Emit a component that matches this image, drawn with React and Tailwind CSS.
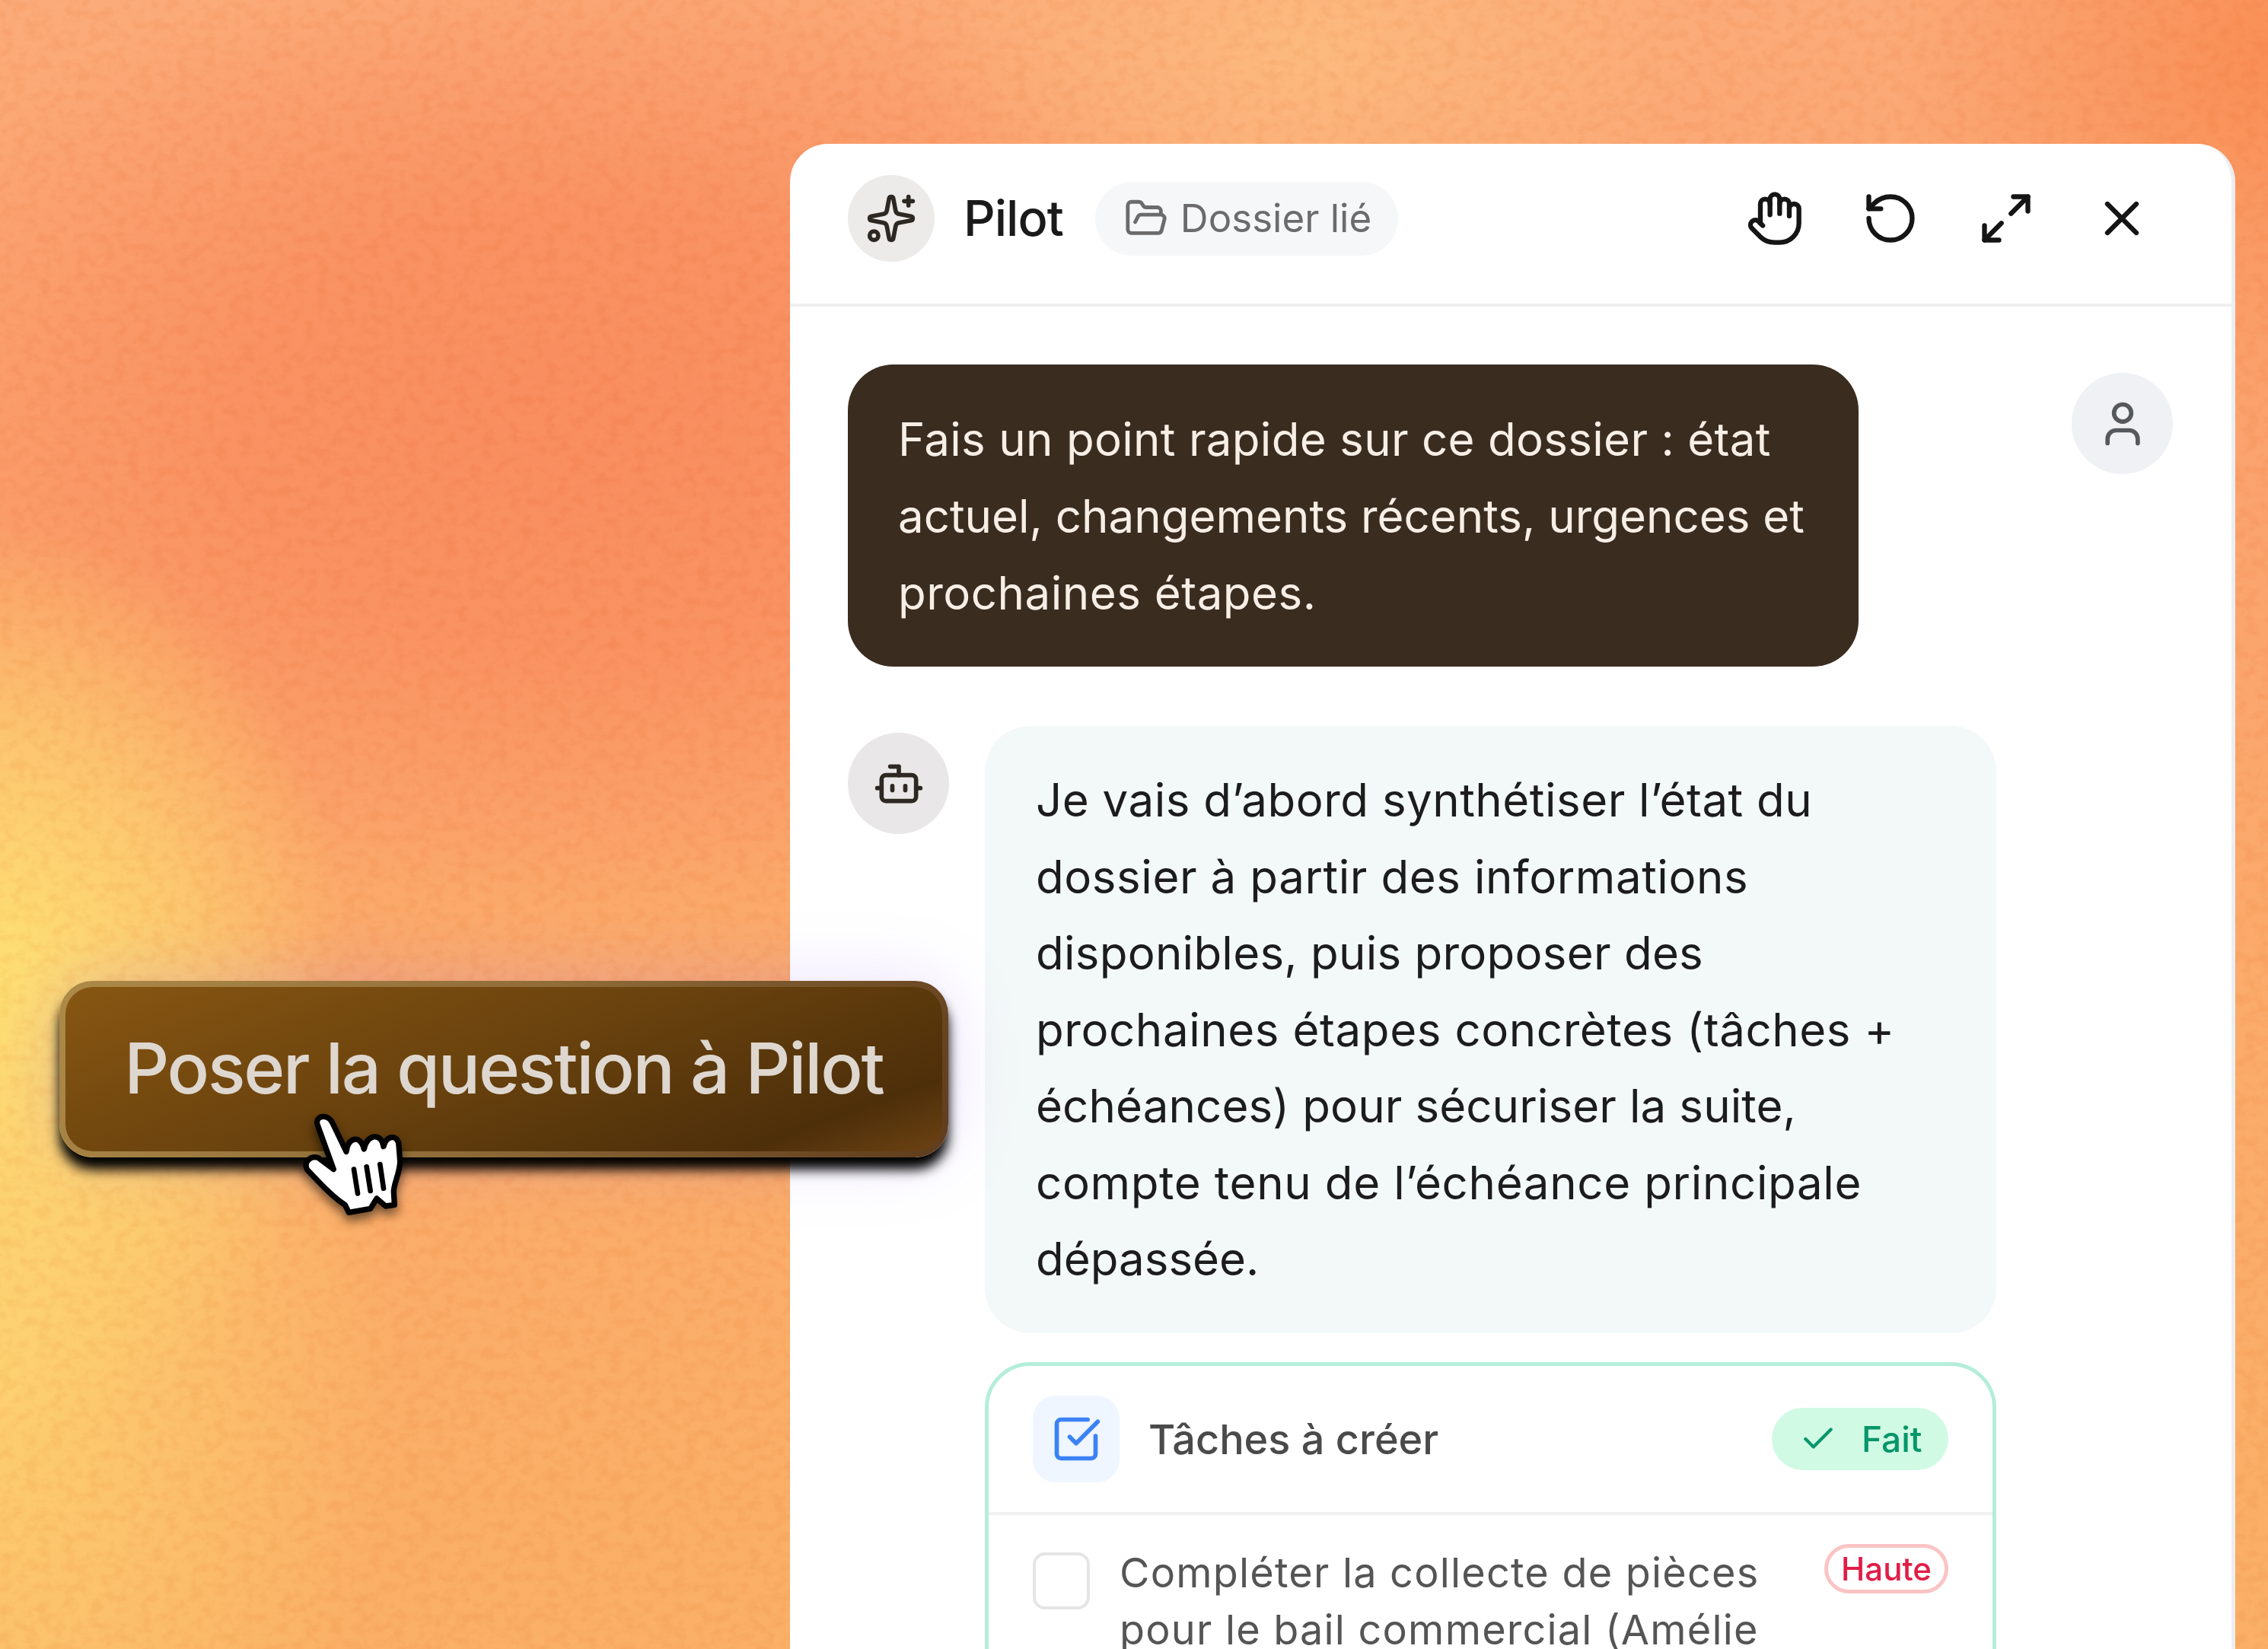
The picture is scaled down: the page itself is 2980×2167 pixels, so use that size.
import { Sparkles, FolderOpen, Hand, RotateCcw, Maximize2, X, User, Bot, SquareCheckBig, Check } from "lucide-react";

function HandCursor()
{
    return (
        <svg viewBox="0 0 660 600" className="absolute left-[360px] top-[1430px] w-[220px] h-[200px] drop-shadow-[0_8px_7px_rgba(0,0,0,0.55)]">
            <path
                d="M170 140 C165 105 215 100 232 140 L285 250 C290 195 340 180 355 240 C365 180 425 175 432 230 C440 185 490 180 492 225 L497 290 C495 340 470 380 472 410 L475 460 L440 465 L405 435 L380 475 L295 490 L280 460 C240 435 200 395 130 320 C115 285 150 265 175 275 L235 320 Z"
                fill="#fff" stroke="#000" strokeWidth="22" strokeLinejoin="round"
            />
            <path d="M315 320L330 415M365 310L380 405M418 300L432 395" stroke="#000" strokeWidth="20" strokeLinecap="round" fill="none" />
        </svg>
    );
}

function App()
{
    return (
        <div className="relative w-[2980px] h-[2167px] overflow-hidden flex justify-end items-start pt-[189px] pr-[43px] [font-family:Inter,sans-serif] bg-[radial-gradient(ellipse_460px_600px_at_0px_1290px,#fee074_0%,#fdd87299_55%,transparent_100%),radial-gradient(ellipse_520px_800px_at_0px_1800px,#fdd070_0%,transparent_100%),radial-gradient(ellipse_520px_300px_at_1720px_60px,#fcba7e_0%,transparent_100%),radial-gradient(ellipse_500px_520px_at_2980px_80px,#f98f56_0%,transparent_100%),radial-gradient(ellipse_1000px_640px_at_760px_560px,#f98e5f_0%,#f98e5fcc_45%,transparent_100%),linear-gradient(180deg,#fbab79_0%,#fba36e_30%,#fbab6b_60%,#fab066_100%)]">
            <svg className="absolute inset-0 w-full h-full opacity-[0.16] mix-blend-multiply">
                <filter id="grain">
                    <feTurbulence type="fractalNoise" baseFrequency="0.06 0.075" numOctaves="4" seed="7" />
                    <feColorMatrix values="0 0 0 0 0.85  0 0 0 0 0.45  0 0 0 0 0.2  0 0 0 3 -1.3" />
                </filter>
                <rect width="100%" height="100%" filter="url(#grain)" />
            </svg>

            <div className="relative w-[1899px] h-[1978px] overflow-hidden bg-white rounded-t-[50px] border-r-[5px] border-[#eceef0]">
                <div className="flex items-center h-[214px] px-[76px] pb-[14px] border-b-[4px] border-[#f0f0f0]">
                    <div className="w-[114px] h-[114px] rounded-full bg-[#ecebea] flex items-center justify-center text-[#2e2823]">
                        <Sparkles size={68} strokeWidth={2} />
                    </div>
                    <span className="ml-[38px] text-[65px] font-medium text-[#1a1a1a] tracking-[-1px]">Pilot</span>
                    <div className="ml-[42px] w-[398px] h-[97px] rounded-full bg-[#f6f7f9] flex items-center pl-[38px] gap-[16px] text-[#6b6b6b]">
                        <FolderOpen size={58} strokeWidth={2} />
                        <span className="text-[51px] whitespace-nowrap">Dossier lié</span>
                    </div>
                    <div className="ml-auto mr-[30px] flex items-center gap-[76px] text-[#151515]">
                        <Hand size={76} strokeWidth={2} />
                        <RotateCcw size={76} strokeWidth={2} />
                        <Maximize2 size={76} strokeWidth={2} />
                        <X size={76} strokeWidth={2} />
                    </div>
                </div>

                <div className="pt-[76px] pl-[76px] pr-[77px]">
                    <div className="flex justify-between items-start">
                        <div className="w-[1328px] h-[397px] rounded-[60px] bg-[#3b2c20] text-[#f7efe6] text-[60px] leading-[101px] pl-[66px] pt-[48px] whitespace-nowrap">
                            <div className="tracking-[0.3px]">Fais un point rapide sur ce dossier : état</div>
                            <div>actuel, changements récents, urgences et</div>
                            <div className="tracking-[0.5px]">prochaines étapes.</div>
                        </div>
                        <div className="mt-[11px] w-[133px] h-[133px] rounded-full bg-[#eff1f4] flex items-center justify-center text-[#55585c]">
                            <User size={68} strokeWidth={2} />
                        </div>
                    </div>

                    <div className="mt-[78px] flex items-start gap-[47px]">
                        <div className="mt-[9px] w-[133px] h-[133px] rounded-full bg-[#e9e7e7] flex items-center justify-center text-[#2e2823]">
                            <Bot size={68} strokeWidth={2} />
                        </div>
                        <div className="w-[1329px] flex flex-col gap-[38px]">
                            <div className="h-[798px] rounded-[60px] bg-[#f3f8f8] text-[#1c1c1c] text-[60px] leading-[100.5px] pl-[67px] pt-[47px] whitespace-nowrap">
                                <div className="tracking-[0.5px]">Je vais d’abord synthétiser l’état du</div>
                                <div className="tracking-[0.57px]">dossier à partir des informations</div>
                                <div className="tracking-[0.25px]">disponibles, puis proposer des</div>
                                <div className="tracking-[0.57px]">prochaines étapes concrètes (tâches +</div>
                                <div className="tracking-[0.1px]">échéances) pour sécuriser la suite,</div>
                                <div className="tracking-[0.63px]">compte tenu de l’échéance principale</div>
                                <div>dépassée.</div>
                            </div>

                            <div className="h-[500px] rounded-t-[60px] border-[5px] border-[#b4eeda] bg-white">
                                <div className="flex items-center h-[196px] pl-[58px] pr-[58px] border-b-[4px] border-[#f1f1f1]">
                                    <div className="w-[114px] h-[114px] rounded-[30px] bg-[#eff6ff] flex items-center justify-center text-[#3b82f6]">
                                        <SquareCheckBig size={68} strokeWidth={2} />
                                    </div>
                                    <span className="ml-[38px] text-[54px] font-medium text-[#4a4a4a] whitespace-nowrap">Tâches à créer</span>
                                    <div className="ml-auto w-[232px] h-[82px] rounded-full bg-[#d1fae5] flex items-center pl-[36px] gap-[32px] text-[#059669]">
                                        <Check size={50} strokeWidth={2} />
                                        <span className="text-[46px] font-medium">Fait</span>
                                    </div>
                                </div>
                                <div className="flex items-start pl-[58px] pr-[58px] pt-[38px]">
                                    <div className="mt-[11px] w-[75px] h-[75px] rounded-[16px] border-[4px] border-[#e5e5e5] shrink-0" />
                                    <div className="ml-[39px] text-[54px] leading-[75px] tracking-[1.2px] text-[#555] whitespace-nowrap">
                                        <div>Compléter la collecte de pièces</div>
                                        <div>pour le bail commercial (Amélie</div>
                                    </div>
                                    <div className="ml-auto w-[163px] h-[65px] rounded-full border-[5px] border-[#fbc4c4] flex items-center justify-center text-[#e11d48] text-[42px] font-medium">Haute</div>
                                </div>
                            </div>
                        </div>
                    </div>
                </div>
            </div>

            <div className="absolute left-[78px] top-[1289px] w-[1168px] h-[232px] rounded-[44px] p-[8px] bg-[linear-gradient(125deg,#ad8a48_0%,#8f6c38_50%,#5f3c1c_100%)] shadow-[0_16px_16px_rgba(0,0,0,1),0_0_90px_rgba(160,120,250,0.22)]">
                <div className="w-full h-full rounded-[36px] flex items-center justify-center pb-[2px] bg-[linear-gradient(160deg,#875612_0%,#6b430e_45%,#4d2f0a_85%,#6d4213_100%)] text-[#ded7cf] text-[92px] font-medium tracking-[-2.2px] whitespace-nowrap">
                    Poser la question à Pilot
                </div>
            </div>
            <HandCursor />
        </div>
    );
}

export default App;
